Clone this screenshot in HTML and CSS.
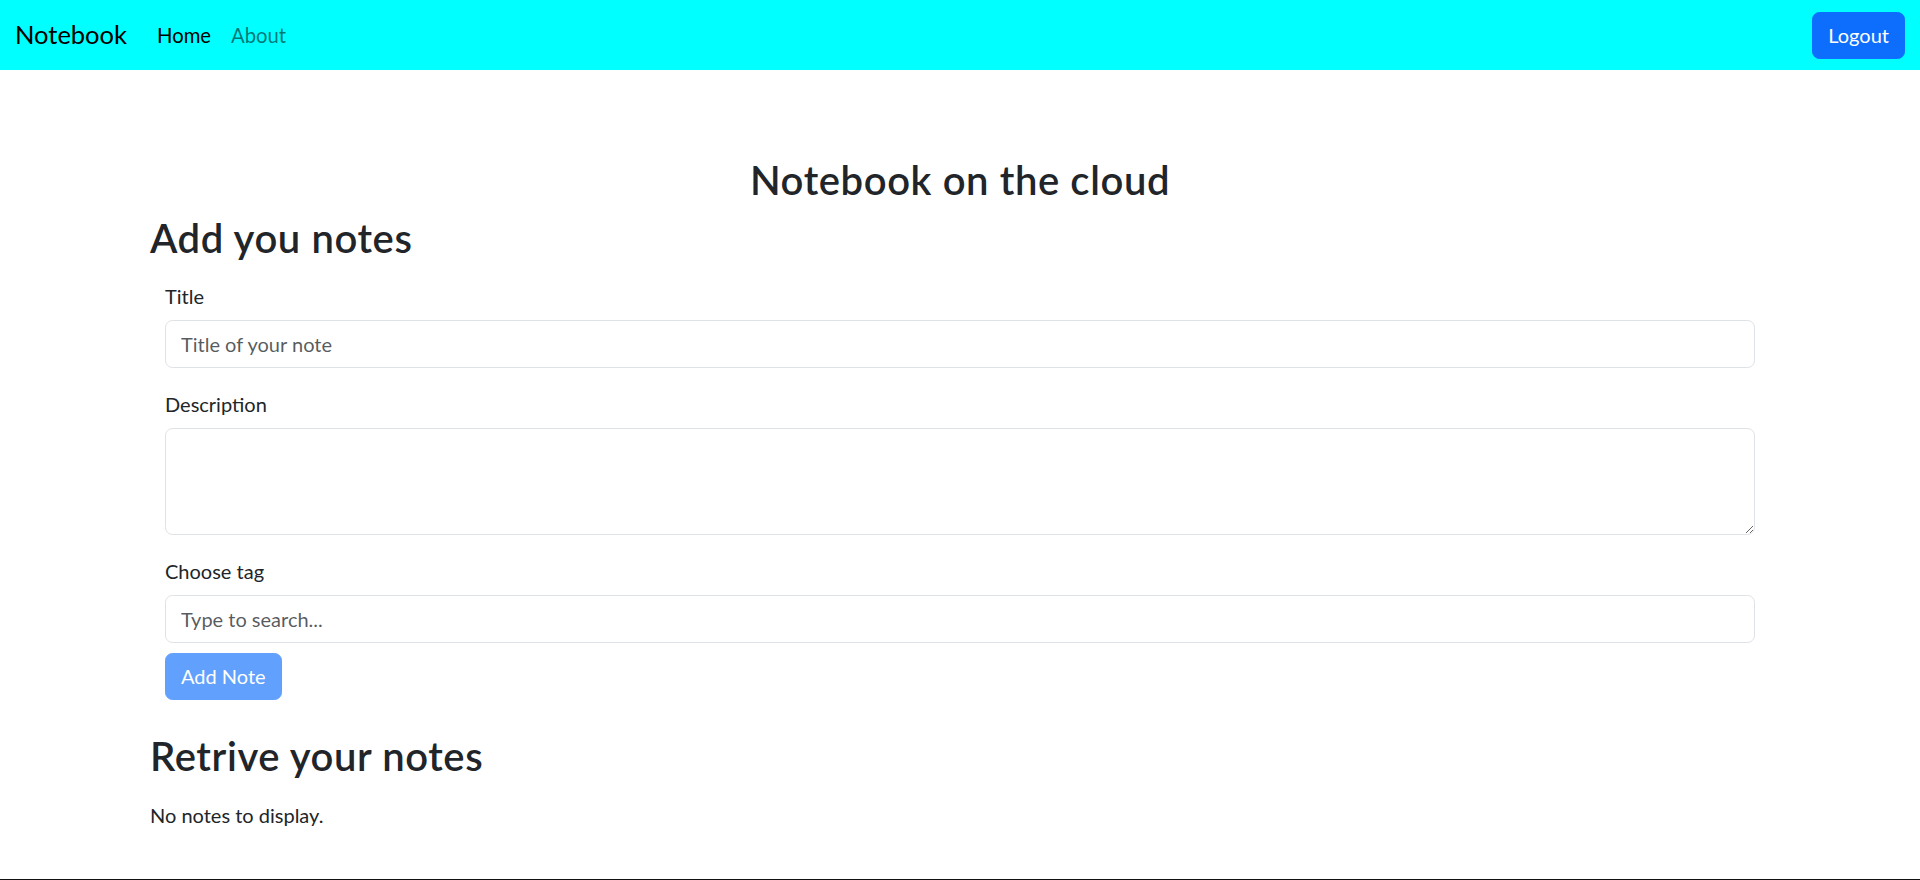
FILE: index.html
```html
<!DOCTYPE html>
<html lang="en">
<head>
<meta charset="utf-8">
<title>Notebook</title>
<link rel="stylesheet" href="styles.css">
</head>
<body>
<nav class="navbar">
  <div class="nav-left">
    <a class="brand" href="#">Notebook</a>
    <ul class="nav-links">
      <li><a class="nav-link active" href="#">Home</a></li>
      <li><a class="nav-link" href="#">About</a></li>
    </ul>
  </div>
  <button class="btn btn-primary" type="button">Logout</button>
</nav>

<main class="container">
  <h2 class="page-title">Notebook on the cloud</h2>
  <h2 class="section-title">Add you notes</h2>
  <form class="note-form">
    <div class="field">
      <label for="title">Title</label>
      <input id="title" class="form-control" type="text" placeholder="Title of your note">
    </div>
    <div class="field">
      <label for="description">Description</label>
      <textarea id="description" class="form-control textarea" rows="3"></textarea>
    </div>
    <div class="field field-tag">
      <label for="tag">Choose tag</label>
      <input id="tag" class="form-control" type="text" placeholder="Type to search...">
    </div>
    <button class="btn btn-primary btn-disabled" type="button" disabled>Add Note</button>
  </form>
  <h2 class="section-title retrieve">Retrive your notes</h2>
  <p class="empty">No notes to display.</p>
</main>
<div class="bottom-edge"></div>
</body>
</html>
```

FILE: styles.css
```css
* {
  box-sizing: border-box;
}

html, body {
  margin: 0;
  padding: 0;
}

body {
  min-height: 880px;
  display: flex;
  flex-direction: column;
  font-family: Lato, "Open Sans", sans-serif;
  font-size: 20px;
  line-height: 1.5;
  color: #212529;
  background: #ffffff;
}

/* Navbar */
.navbar {
  height: 70px;
  background: #00ffff;
  padding: 10px 15px;
  display: flex;
  align-items: center;
  justify-content: space-between;
}

.nav-left {
  display: flex;
  align-items: center;
}

.brand {
  font-size: 25.5px;
  line-height: 37.5px;
  padding: 6.25px 0;
  margin-right: 20px;
  color: #000000;
  text-decoration: none;
}

.nav-links {
  list-style: none;
  display: flex;
  margin: 0;
  padding: 0;
}

.nav-link {
  display: block;
  padding: 10px;
  font-size: 20.25px;
  line-height: 30px;
  color: rgba(0, 0, 0, 0.55);
  text-decoration: none;
}

.nav-link.active {
  color: #000000;
}

/* Buttons */
.btn {
  font-family: inherit;
  font-size: 20px;
  line-height: 30px;
  padding: 7.5px 15px;
  border: 1px solid transparent;
  border-radius: 7.5px;
  cursor: pointer;
}

.btn-primary {
  background: #0d6efd;
  border-color: #0d6efd;
  color: #ffffff;
}

.btn-disabled {
  opacity: 0.65;
  cursor: default;
}

/* Content */
.container {
  width: 100%;
  max-width: 1650px;
  margin: 0 auto;
  padding: 84px 15px 0;
}

h2 {
  font-size: 40px;
  font-weight: 600;
  letter-spacing: 0.6px;
  line-height: 48px;
  padding-top: 2px;
  margin: 0 0 8px;
}

.page-title {
  text-align: center;
}

.note-form {
  padding: 0 15px;
  margin-top: 18px;
}

.field {
  margin-bottom: 20px;
}

.field-tag {
  margin-bottom: 10px;
}

label {
  display: block;
  padding-top: 1px;
  margin-bottom: 9px;
  line-height: 30px;
}

.form-control {
  display: block;
  width: 100%;
  height: 47.5px;
  padding: 8px 15px 7px;
  font-family: inherit;
  font-size: 20px;
  line-height: 30px;
  color: #212529;
  background: #ffffff;
  border: 1px solid #dee2e6;
  border-radius: 7.5px;
  outline: none;
}

.form-control::placeholder {
  color: rgba(33, 37, 41, 0.75);
}

.textarea {
  height: 107.5px;
  resize: vertical;
}

.retrieve {
  margin-top: 30px;
}

.empty {
  margin: 20px 0 0;
  line-height: 30px;
}

.bottom-edge {
  margin-top: auto;
  height: 1px;
  background: #111111;
}
```
